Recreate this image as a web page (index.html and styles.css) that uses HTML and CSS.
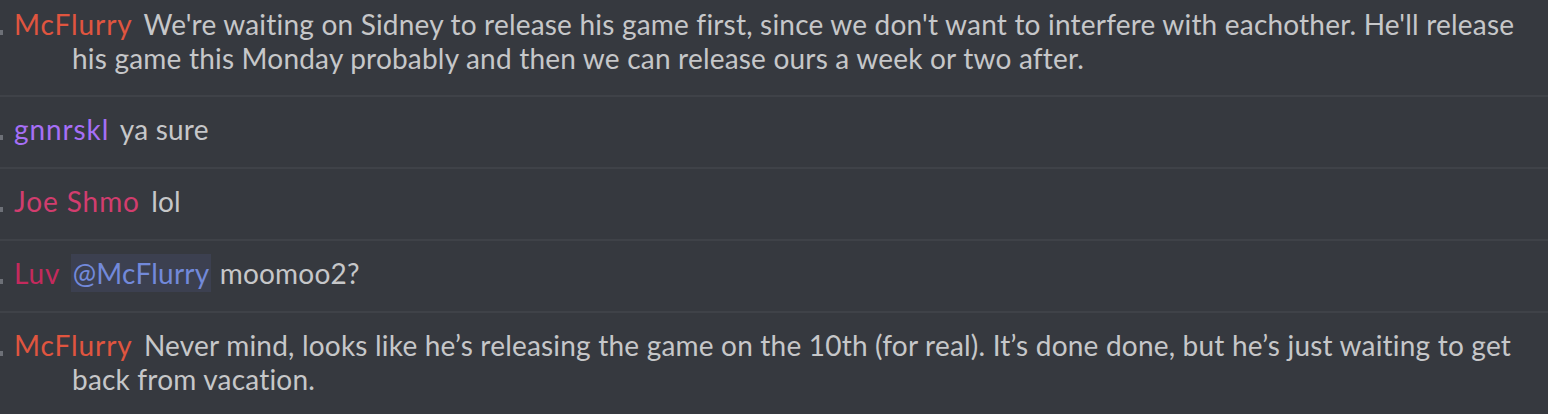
FILE: index.html
```html
<!DOCTYPE html>
<html>
<head>
<meta charset="utf-8">
<link rel="stylesheet" href="styles.css">
</head>
<body>
<div class="chat">
  <div class="msg first">
    <span class="stamp"></span>
    <p class="text"><span class="name red">McFlurry</span> We're waiting on Sidney to release his game first, since we don't want to interfere with eachother. He'll release his game this Monday probably and then we can release ours a week or two after.</p>
  </div>
  <div class="msg">
    <span class="stamp"></span>
    <p class="text"><span class="name purple">gnnrskl</span> ya sure</p>
  </div>
  <div class="msg">
    <span class="stamp"></span>
    <p class="text"><span class="name pink">Joe Shmo</span> lol</p>
  </div>
  <div class="msg">
    <span class="stamp"></span>
    <p class="text"><span class="name magenta">Luv</span> <span class="mention">@McFlurry</span> moomoo2?</p>
  </div>
  <div class="msg last">
    <span class="stamp"></span>
    <p class="text"><span class="name red">McFlurry</span> Never mind, looks like he’s releasing the game on the 10th (for real). It’s done done, but he’s just waiting to get back from vacation.</p>
  </div>
</div>
</body>
</html>
```

FILE: styles.css
```css
html, body {
  margin: 0;
  padding: 0;
  background: #36393f;
}
body {
  width: 1548px;
  height: 414px;
  overflow: hidden;
  font-family: Lato, "Open Sans", sans-serif;
  font-size: 28px;
  line-height: 34px;
  letter-spacing: 0.2px;
  color: #c6c7c9;
}
.chat {
  display: flex;
  flex-direction: column;
}
.msg {
  display: flex;
  align-items: baseline;
  padding: 15px 16px 21px 0;
  border-bottom: 2px solid #3f4248;
}
.msg.first {
  padding-top: 7px;
  padding-bottom: 20px;
}
.msg.last {
  border-bottom: none;
}
.stamp {
  flex: 0 0 3px;
  height: 5px;
  background: #6d7077;
  margin-right: 11px;
}
.text {
  margin: 0;
  flex: 1;
  padding-left: 58px;
  text-indent: -58px;
}
.name {
  margin-right: 4px;
  letter-spacing: 0.9px;
}
.red { color: #e0553f; }
.purple { color: #a66ff6; }
.pink { color: #d23d6e; }
.magenta { color: #c42a5d; }
.mention {
  color: #7289da;
  background: #3c4050;
  padding: 2px 2px;
  margin-left: -1px;
  margin-right: 1px;
}
```
